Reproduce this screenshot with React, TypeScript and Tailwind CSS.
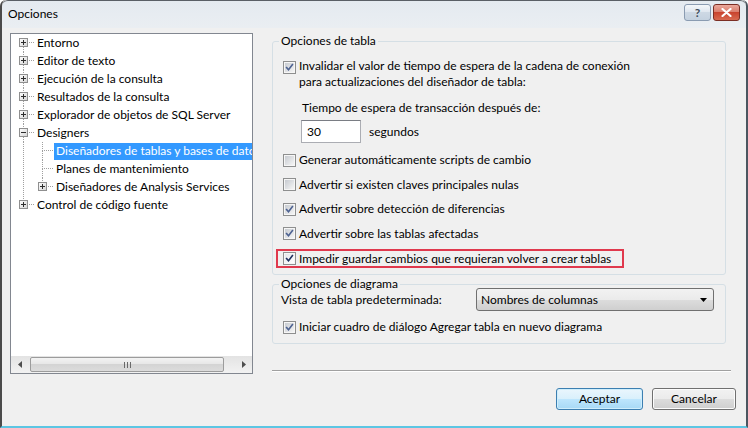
import React from 'react';

type Node = {
  label: string;
  lvl: 1 | 2;
  exp?: '+' | '-';
  top: boolean;
  bot: boolean;
  sel?: boolean;
};

const nodes: Node[] = [
  { label: 'Entorno', lvl: 1, exp: '+', top: false, bot: true },
  { label: 'Editor de texto', lvl: 1, exp: '+', top: true, bot: true },
  { label: 'Ejecución de la consulta', lvl: 1, exp: '+', top: true, bot: true },
  { label: 'Resultados de la consulta', lvl: 1, exp: '+', top: true, bot: true },
  { label: 'Explorador de objetos de SQL Server', lvl: 1, exp: '+', top: true, bot: true },
  { label: 'Designers', lvl: 1, exp: '-', top: true, bot: true },
  { label: 'Diseñadores de tablas y bases de datos', lvl: 2, top: true, bot: true, sel: true },
  { label: 'Planes de mantenimiento', lvl: 2, top: true, bot: true },
  { label: 'Diseñadores de Analysis Services', lvl: 2, exp: '+', top: true, bot: false },
  { label: 'Control de código fuente', lvl: 1, exp: '+', top: true, bot: false },
];

const DOT = '#a0a0a0';

const TreeGlyph = ({ node }: { node: Node }) => {
  const w = node.lvl === 1 ? 24 : 43;
  const x = node.lvl === 1 ? 12.5 : 31.5;
  const hasBox = !!node.exp;
  return (
    <svg width={w} height="18" viewBox={`0 0 ${w} 18`} className="shrink-0" shapeRendering="crispEdges">
      <defs>
        <linearGradient id="tbox" x1="0" y1="0" x2="1" y2="1">
          <stop offset="0" stopColor="#ffffff" />
          <stop offset="1" stopColor="#d4d4d4" />
        </linearGradient>
      </defs>
      {node.lvl === 2 && <line x1="12.5" y1="0" x2="12.5" y2="18" stroke={DOT} strokeDasharray="1 1" />}
      {node.top && <line x1={x} y1="0" x2={x} y2={hasBox ? 4 : 9} stroke={DOT} strokeDasharray="1 1" />}
      {node.bot && <line x1={x} y1={hasBox ? 13 : 9} x2={x} y2="18" stroke={DOT} strokeDasharray="1 1" />}
      <line x1={hasBox ? x + 5 : x + 1} y1="8.5" x2={w - 1} y2="8.5" stroke={DOT} strokeDasharray="1 1" />
      {hasBox && (
        <g>
          <rect x={x - 4} y="4.5" width="8" height="8" fill="url(#tbox)" stroke="#8f8f8f" />
          <line x1={x - 2.5} y1="8.5" x2={x + 2.5} y2="8.5" stroke="#2d2d2d" />
          {node.exp === '+' && <line x1={x} y1="6" x2={x} y2="11" stroke="#2d2d2d" />}
        </g>
      )}
    </svg>
  );
};

const Check = ({ checked, strong }: { checked: boolean; strong?: boolean }) => (
  <svg width="13" height="13" viewBox="0 0 13 13" className="shrink-0">
    <defs>
      <linearGradient id="cbin" x1="0" y1="0" x2="1" y2="1">
        <stop offset="0" stopColor="#c7cbd1" />
        <stop offset="1" stopColor="#f5f5f5" />
      </linearGradient>
      <linearGradient id="cbin2" x1="0" y1="0" x2="1" y2="1">
        <stop offset="0" stopColor="#e4e6ea" />
        <stop offset="1" stopColor="#ffffff" />
      </linearGradient>
    </defs>
    <rect x="0.5" y="0.5" width="12" height="12" fill="#f6f6f6" stroke="#8e8f8f" shapeRendering="crispEdges" />
    <rect x="2" y="2" width="9" height="9" fill={strong ? 'url(#cbin2)' : 'url(#cbin)'} shapeRendering="crispEdges" />
    {checked && (
      <path
        d="M3.6 6.6 L5.5 8.7 L9.4 3.7"
        fill="none"
        stroke={strong ? '#1f3160' : '#4d6291'}
        strokeWidth="1.6"
        strokeLinecap="square"
      />
    )}
  </svg>
);

const CheckRow = ({ checked, label }: { checked: boolean; label: string }) => (
  <div className="flex items-center gap-[3px] h-[16px]">
    <Check checked={checked} />
    <span>{label}</span>
  </div>
);

const TitleButton = ({ kind }: { kind: 'help' | 'close' }) =>
  kind === 'help' ? (
    <div className="w-[27px] h-[17px] rounded-[3px] border border-[#8a9bb1] bg-[linear-gradient(#f4f7fa,#dde5ee_50%,#cdd8e4_50%,#c4d1df)] flex items-center justify-center text-[12px] leading-none text-[#3f4c5c] font-bold">
      ?
    </div>
  ) : (
    <div className="w-[27px] h-[17px] rounded-[3px] border border-[#7b2e24] bg-[linear-gradient(#eba89b,#d97b6a_50%,#c9442f_50%,#d86a50)] flex items-center justify-center">
      <svg width="11" height="9" viewBox="0 0 11 9">
        <path d="M1.5 1 L9.5 8 M9.5 1 L1.5 8" stroke="#ffffff" strokeWidth="2.2" strokeLinecap="round" />
      </svg>
    </div>
  );

export default function App() {
  return (
    <div className="w-[748px] h-[428px] bg-[#f0f0f0] border-l-2 border-r-2 border-b-2 border-l-[#4b4b4b] border-r-[#4b5660] border-b-[#5cc6e3] rounded-t-[6px] flex flex-col overflow-hidden font-['Lato',sans-serif] text-[12px] text-black">
      {/* title bar */}
      <div className="h-[28px] shrink-0 flex items-start bg-[linear-gradient(#e4eaf0,#eaeef2)] border-t border-t-[#5a5f66] rounded-t-[6px]">
        <span className="ml-[6px] mt-[5px] leading-[16px]">Opciones</span>
        <div className="ml-auto mr-[6px] mt-[3px] flex gap-[2px]">
          <TitleButton kind="help" />
          <TitleButton kind="close" />
        </div>
      </div>

      {/* body */}
      <div className="flex pl-[8px] pt-[5px]">
        {/* tree */}
        <div className="w-[243px] h-[341px] border border-[#828790] bg-white flex flex-col">
          <div className="flex-1 overflow-hidden whitespace-nowrap">
            {nodes.map((n) => (
              <div key={n.label} className="flex h-[18px] items-center">
                <TreeGlyph node={n} />
                <span
                  className={
                    n.sel
                      ? 'px-[2px] h-[17px] leading-[16px] bg-[#3399ff] text-white'
                      : 'px-[2px] h-[17px] leading-[16px]'
                  }
                >
                  {n.label}
                </span>
              </div>
            ))}
          </div>
          {/* horizontal scrollbar */}
          <div className="h-[17px] shrink-0 flex items-center bg-[linear-gradient(#e3e3e3,#f2f2f2)]">
            <div className="w-[17px] h-[17px] flex items-center justify-center">
              <svg width="4" height="7" viewBox="0 0 4 7">
                <path d="M4 0 L0 3.5 L4 7 Z" fill="#4d4d4d" />
              </svg>
            </div>
            <div className="ml-[2px] w-[194px] h-[15px] rounded-[2px] border border-[#9c9c9c] bg-[linear-gradient(#f3f3f3,#e6e6e6_50%,#d4d4d4_50%,#dcdcdc)] flex items-center justify-center gap-[2px]">
              <span className="w-px h-[6px] bg-[#6a6a6a]" />
              <span className="w-px h-[6px] bg-[#6a6a6a]" />
              <span className="w-px h-[6px] bg-[#6a6a6a]" />
            </div>
            <div className="ml-auto w-[17px] h-[17px] flex items-center justify-center">
              <svg width="4" height="7" viewBox="0 0 4 7">
                <path d="M0 0 L4 3.5 L0 7 Z" fill="#4d4d4d" />
              </svg>
            </div>
          </div>
        </div>

        {/* right pane */}
        <div className="ml-[19px] w-[459px] h-[341px] flex flex-col">
          <fieldset className="w-[454px] border border-[#d5dfe5] rounded-[3px] pl-[6px] pb-[6px]">
            <legend className="px-[2px] leading-[16px]">Opciones de tabla</legend>
            <div className="pl-[4px] flex flex-col">
              <div className="mt-[9px] flex items-start gap-[3px]">
                <div className="mt-[3px]">
                  <Check checked />
                </div>
                <span className="leading-[16px]">
                  Invalidar el valor de tiempo de espera de la cadena de conexión
                  <br />
                  para actualizaciones del diseñador de tabla:
                </span>
              </div>
              <div className="mt-[10px] ml-[19px] leading-[16px]">Tiempo de espera de transacción después de:</div>
              <div className="mt-[4px] ml-[18px] flex items-center gap-[8px]">
                <div className="w-[60px] h-[23px] bg-white border border-[#abadb3] border-t-[#7a7d84] pl-[5px] flex items-center">
                  30
                </div>
                <span>segundos</span>
              </div>
              <div className="mt-[9px] flex flex-col gap-[8.5px]">
                <CheckRow checked={false} label="Generar automáticamente scripts de cambio" />
                <CheckRow checked={false} label="Advertir si existen claves principales nulas" />
                <CheckRow checked label="Advertir sobre detección de diferencias" />
                <CheckRow checked label="Advertir sobre las tablas afectadas" />
              </div>
              <div className="mt-[7.5px] -ml-[7px] w-[348px] h-[19px] border-2 border-[#e0394d] pl-[5px] flex items-center gap-[3px]">
                <Check checked strong />
                <span>Impedir guardar cambios que requieran volver a crear tablas</span>
              </div>
            </div>
          </fieldset>

          <fieldset className="mt-[1px] w-[454px] border border-[#d5dfe5] rounded-[3px] pl-[6px] pb-[8px]">
            <legend className="px-[2px] leading-[16px]">Opciones de diagrama</legend>
            <div className="-mt-[4px] flex items-center h-[23px]">
              <span className="w-[197px] pl-[2px]">Vista de tabla predeterminada:</span>
              <div className="w-[238px] h-[23px] rounded-[3px] border border-[#707070] bg-[linear-gradient(#f2f2f2,#ebebeb_50%,#dddddd_50%,#cfcfcf)] flex items-center pl-[4px] pr-[6px]">
                <span>Nombres de columnas</span>
                <svg className="ml-auto" width="7" height="4" viewBox="0 0 7 4">
                  <path d="M0 0 H7 L3.5 4 Z" fill="#000" />
                </svg>
              </div>
            </div>
            <div className="mt-[8px] pl-[4px]">
              <CheckRow checked label="Iniciar cuadro de diálogo Agregar tabla en nuevo diagrama" />
            </div>
          </fieldset>

          <div className="mt-[26px] w-[459px] h-[2px] border-t border-t-[#a0a0a0] border-b border-b-white" />
        </div>
      </div>

      {/* buttons */}
      <div className="mt-[14px] flex justify-end gap-[9px] pr-[10px]">
        <div className="w-[87px] h-[22px] rounded-[3px] border border-[#3c7fb1] bg-[linear-gradient(#eaf6fd,#d9f0fc_50%,#bee6fd_50%,#a7d9f5)] shadow-[inset_0_0_0_1px_#cfeefc] flex items-center justify-center">
          Aceptar
        </div>
        <div className="w-[84px] h-[22px] rounded-[3px] border border-[#707070] bg-[linear-gradient(#f2f2f2,#ebebeb_50%,#dddddd_50%,#cfcfcf)] shadow-[inset_0_0_0_1px_#fcfcfc] flex items-center justify-center">
          Cancelar
        </div>
      </div>
    </div>
  );
}
